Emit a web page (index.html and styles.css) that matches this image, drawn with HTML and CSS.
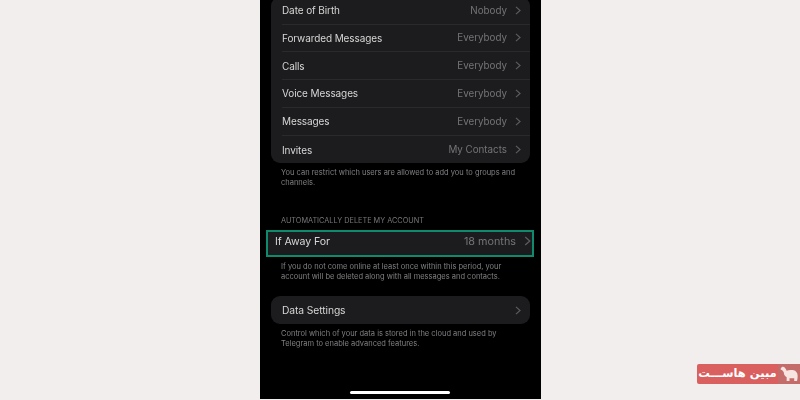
FILE: index.html
```html
<!DOCTYPE html>
<html lang="en">
<head>
<meta charset="utf-8">
<title>Privacy settings</title>
<link rel="stylesheet" href="styles.css">
</head>
<body>
<main class="phone">
  <section class="card card-top">
    <div class="row"><span class="label">Date of Birth</span><span class="value">Nobody</span><svg class="chev" viewBox="0 0 7 11"><path d="M1 1l5 4.500L1 10"/></svg></div>
    <div class="row"><span class="label">Forwarded Messages</span><span class="value">Everybody</span><svg class="chev" viewBox="0 0 7 11"><path d="M1 1l5 4.500L1 10"/></svg></div>
    <div class="row"><span class="label">Calls</span><span class="value">Everybody</span><svg class="chev" viewBox="0 0 7 11"><path d="M1 1l5 4.500L1 10"/></svg></div>
    <div class="row"><span class="label">Voice Messages</span><span class="value">Everybody</span><svg class="chev" viewBox="0 0 7 11"><path d="M1 1l5 4.500L1 10"/></svg></div>
    <div class="row"><span class="label">Messages</span><span class="value">Everybody</span><svg class="chev" viewBox="0 0 7 11"><path d="M1 1l5 4.500L1 10"/></svg></div>
    <div class="row row-last"><span class="label">Invites</span><span class="value">My Contacts</span><svg class="chev" viewBox="0 0 7 11"><path d="M1 1l5 4.500L1 10"/></svg></div>
  </section>
  <p class="note note-first">You can restrict which users are allowed to add you to groups and channels.</p>
  <h2 class="heading">AUTOMATICALLY DELETE MY ACCOUNT</h2>
  <div class="highlight">
    <span class="label label-big">If Away For</span><span class="value value-big">18 months</span><svg class="chev chev-big" viewBox="0 0 7 11"><path d="M1 1l5 4.500L1 10"/></svg>
  </div>
  <p class="note note-away">If you do not come online at least once within this period, your account will be deleted along with all messages and contacts.</p>
  <section class="card card-data">
    <div class="row row-last"><span class="label label-data">Data Settings</span><svg class="chev" viewBox="0 0 7 11"><path d="M1 1l5 4.500L1 10"/></svg></div>
  </section>
  <p class="note note-data">Control which of your data is stored in the cloud and used by Telegram to enable advanced features.</p>
  <div class="home-bar"></div>
</main>
<aside class="brand">
  <span class="brand-name" dir="rtl">مبین هاســـت</span>
  <span class="brand-icon">
    <svg viewBox="0 0 20 18"><path d="M2 1C4 0 6 2 7 5c3-1 8-1 10 1 2 2 2 5 1 10h-3v-3h-5v3H7v-4C5 11 4 9 4 7 3 5 2 4 1 4 0 3 1 2 2 1z"/></svg>
  </span>
</aside>
</body>
</html>
```
FILE: styles.css
```css
* { box-sizing: border-box; }
html, body { margin: 0; height: 100%; }
body {
  width: 800px;
  height: 400px;
  overflow: hidden;
  background: #f2eeed;
  font-family: "Inter", "Liberation Sans", sans-serif;
  position: relative;
}
.phone {
  width: 281px;
  height: 399px;
  margin-left: 260px;
  background: #000;
  padding: 0 11px;
  overflow: hidden;
  position: relative;
  display: flex;
  flex-direction: column;
  filter: blur(0.3px);
}
.card {
  width: 259px;
  background: #1c1c1e;
  border-radius: 9px;
  flex: none;
}
.card-top { margin-top: -3.3px; }
.row {
  height: 27.8px;
  margin-left: 11px;
  padding-right: 9px;
  display: flex;
  align-items: center;
  border-bottom: 1px solid #2a2a2c;
}
.row-last { border-bottom: 0; }
.label {
  font-size: 10px;
  letter-spacing: -0.1px;
  color: #d6d6d6;
  flex: 1;
  white-space: nowrap;
}
.value {
  font-size: 9.8px;
  color: #747478;
  white-space: nowrap;
  margin-right: 8px;
}
.chev {
  width: 6px;
  height: 9px;
  flex: none;
  fill: none;
  stroke: #5d5d60;
  stroke-width: 1.4;
}
.note {
  margin: 0;
  padding: 0 10px;
  font-size: 7.5px;
  line-height: 9.8px;
  color: #808084;
  flex: none;
}
.note-first { margin-top: 4.3px; }
.heading {
  margin: 28.6px 0 0;
  padding: 0 10px;
  font-size: 7.3px;
  line-height: 10px;
  font-weight: 400;
  color: #77777a;
  flex: none;
}
.highlight {
  width: 268px;
  height: 27px;
  margin: 4px 0 0 -5px;
  border: 2px solid #0f8a6d;
  background: #1c1c1e;
  padding: 0 0 4px 7px;
  display: flex;
  align-items: center;
  flex: none;
}
.label-big { font-size: 10.6px; letter-spacing: -0.1px; }
.value-big { font-size: 10.8px; margin-right: 8px; }
.chev-big { width: 7px; height: 10px; margin-right: 1px; }
.note-away { margin-top: 5px; }
.card-data { margin-top: 14.6px; height: 28px; }
.card-data .row { height: 28px; }
.label-data { font-size: 10.3px; }
.note-data { margin-top: 5px; }
.home-bar {
  position: absolute;
  left: 90px;
  top: 391px;
  width: 100px;
  height: 3px;
  border-radius: 2px;
  background: #fff;
}
.brand {
  position: absolute;
  left: 697px;
  top: 364px;
  width: 103px;
  height: 20px;
  display: flex;
}
.brand-name {
  width: 81px;
  background: #d9605f;
  border-radius: 2px 0 0 2px;
  color: #fff;
  font-family: "DejaVu Sans", sans-serif;
  font-size: 11.5px;
  font-weight: 700;
  line-height: 18px;
  text-align: center;
  white-space: nowrap;
}
.brand-icon {
  width: 22px;
  background: #c46c6a;
  display: flex;
  align-items: center;
  justify-content: center;
}
.brand-icon svg { width: 19px; height: 17px; fill: #f7e3e0; }
```
